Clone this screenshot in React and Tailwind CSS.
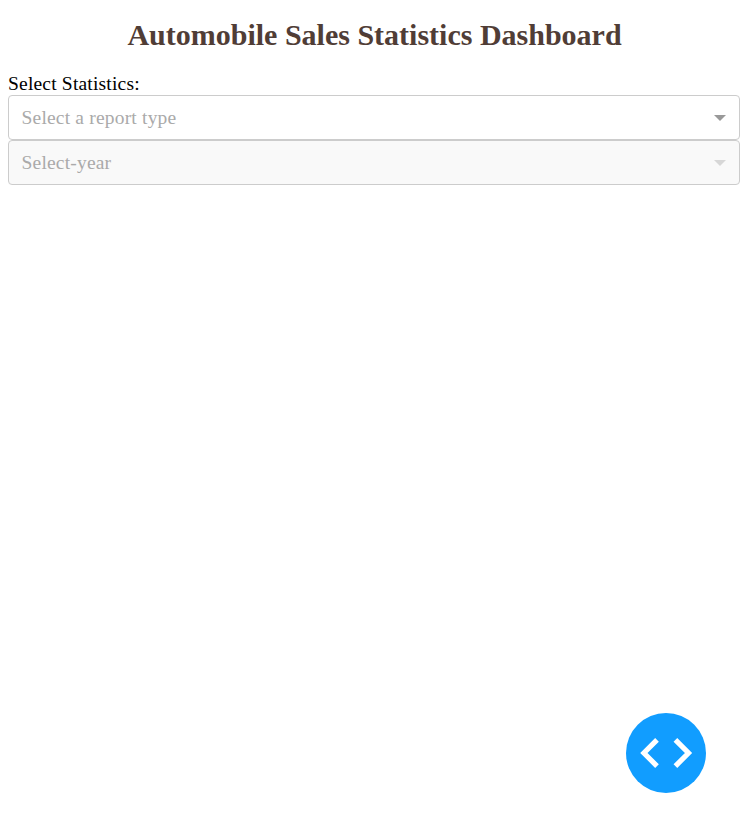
function Select({ placeholder, disabled }) {
  return (
    <div
      className={`flex h-[45px] w-full items-center justify-between rounded-[4px] border border-[#cccccc] pr-[13px] pl-[12.5px] ${disabled ? "bg-[#f9f9f9]" : "bg-white"}`}
    >
      <span className="text-[19.5px] leading-[43px] tracking-[0.19px] text-[#aaaaaa]">{placeholder}</span>
      <span
        className={`h-0 w-0 border-x-[6px] border-t-[6px] border-x-transparent border-t-[#999999] ${disabled ? "opacity-35" : ""}`}
      />
    </div>
  );
}

export default function App() {
  return (
    <main className="relative flex h-[830px] w-[745px] flex-col bg-white pr-[5px] pl-2 font-['Liberation_Serif',serif]">
      <h1 className="mt-[18px] pl-px text-center text-[30px] leading-[34px] font-bold whitespace-nowrap text-[#503d36]">
        Automobile Sales Statistics Dashboard
      </h1>
      <label className="mt-[21px] text-[19.5px] leading-[22px] tracking-[0.19px] text-black">Select Statistics:</label>
      <Select placeholder="Select a report type" />
      <Select placeholder="Select-year" disabled />
      <button
        aria-label="Toggle debug menu"
        className="absolute top-[713px] left-[626px] flex size-20 items-center justify-center rounded-full bg-[#119dff]"
      >
        <svg width="80" height="80" viewBox="0 0 80 80" fill="none" stroke="white" strokeWidth="5.2">
          <path d="M31 26.9L17.9 40L31 53.1M49.4 26.9L62.5 40L49.4 53.1" />
        </svg>
      </button>
    </main>
  );
}
